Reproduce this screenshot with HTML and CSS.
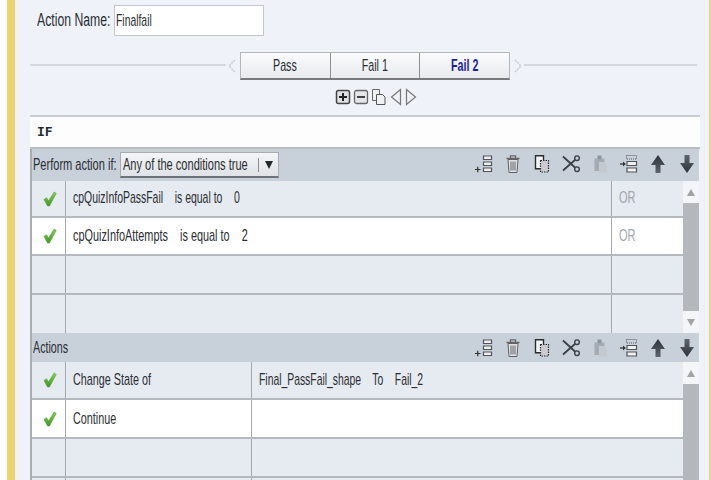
FILE: index.html
```html
<!DOCTYPE html>
<html lang="en">
<head>
<meta charset="utf-8">
<title>Advanced Actions</title>
<link rel="stylesheet" href="styles.css">
</head>
<body>
<svg class="defs" width="0" height="0" aria-hidden="true">
  <defs>
    <linearGradient id="grn" x1="0" y1="0" x2="0" y2="1"><stop offset="0" stop-color="#8fd052"/><stop offset="1" stop-color="#3a9a20"/></linearGradient>
    <linearGradient id="arr" x1="0" y1="0" x2="0" y2="1"><stop offset="0" stop-color="#2c3238"/><stop offset="1" stop-color="#5d646b"/></linearGradient>
    <linearGradient id="arrd" x1="0" y1="0" x2="0" y2="1"><stop offset="0" stop-color="#5d646b"/><stop offset="1" stop-color="#2c3238"/></linearGradient>
    <symbol id="check" viewBox="0 0 14 16"><path d="M1 8.500 3.600 6.800 5.500 10 11.200 1 13.200 2.400 6.400 15H4.600z" fill="url(#grn)" stroke="#4d9a38" stroke-width=".6"/></symbol>
    <symbol id="add" viewBox="0 0 20 20"><path d="M1 15.500h5.500M3.750 12.800v5.500" stroke="#333" stroke-width="1.200" fill="none"/><path d="M9.500 2h8v3.500h-8zM9.500 8h8v3.500h-8zM9.500 14h8v3.500h-8z" fill="#eef0f3" stroke="#50555a" stroke-width="1.200"/></symbol>
    <symbol id="trash" viewBox="0 0 20 20"><path d="M3.500 4.500h13M7.500 4V1.800h5V4" fill="none" stroke="#666" stroke-width="1.300"/><path d="M5 5.500l1 13h8l1-13zM8 7.500v9M10 7.500v9M12 7.500v9" fill="#dfe1e5" stroke="#5f6368" stroke-width="1"/></symbol>
    <symbol id="copy" viewBox="0 0 20 20"><path d="M3.500 1.800h8v13h-8z" fill="#f3f4f6" stroke="#2a2d30" stroke-width="1.400"/><path d="M8.500 6.500h8v11.500h-8z" fill="#c9ccd0" stroke="#333" stroke-width="1.200" stroke-dasharray="1.500 1"/></symbol>
    <symbol id="cut" viewBox="0 0 20 20"><path d="M2 2.500 14 13.500M2 16.500 14 6" fill="none" stroke="#3a3f44" stroke-width="1.800"/><circle cx="16" cy="4.200" r="2.300" fill="none" stroke="#3a3f44" stroke-width="1.400"/><circle cx="16" cy="15.200" r="2.300" fill="none" stroke="#3a3f44" stroke-width="1.400"/></symbol>
    <symbol id="paste" viewBox="0 0 20 20"><path d="M4.500 4.500h10V17h-10z" fill="#a4abb3"/><path d="M7.500 1.500h4v3.500h-4z" fill="#8a929a"/><path d="M9 8h5.500l2.500 2.500V18.500H9z" fill="#c4c9cf"/></symbol>
    <symbol id="insert" viewBox="0 0 20 20"><path d="M7.500 1.500h10v3.500h-10z" fill="none" stroke="#555a60" stroke-width="1" stroke-dasharray="1 1"/><path d="M1 10h4" fill="none" stroke="#333" stroke-width="1.300"/><path d="M4 7.500 6.800 10 4 12.500z" fill="#333"/><path d="M8 7.500h9.500v4H8zM8 14h9.500v4H8z" fill="#eef0f3" stroke="#50555a" stroke-width="1.200"/></symbol>
    <symbol id="up" viewBox="0 0 20 20"><path d="M10 1 17 11h-4.500v8h-5v-8H3z" fill="url(#arr)"/></symbol>
    <symbol id="down" viewBox="0 0 20 20"><path d="M10 19 3 9h4.500V1h5v8H17z" fill="url(#arrd)"/></symbol>
  </defs>
</svg>
<div class="page">
  <div class="strip"></div>
  <main class="content">
    <div class="name-row">
      <label class="name-label"><span class="tx">Action Name:</span></label>
      <div class="name-input"><span class="tx">Finalfail</span></div>
    </div>

    <div class="tabs-row">
      <div class="rule rule-left"></div>
      <svg class="chev chev-left" width="12" height="16" viewBox="0 0 12 16"><path d="M9 2 3 8l6 6" fill="none" stroke="#c8ccd0" stroke-width="1.500" stroke-dasharray="2 1"/></svg>
      <div class="tabs">
        <div class="tab"><span class="tx">Pass</span></div>
        <div class="tab"><span class="tx">Fail 1</span></div>
        <div class="tab active"><span class="tx">Fail 2</span></div>
      </div>
      <svg class="chev chev-right" width="12" height="16" viewBox="0 0 12 16"><path d="M3 2l6 6-6 6" fill="none" stroke="#c8ccd0" stroke-width="1.500" stroke-dasharray="2 1"/></svg>
      <div class="rule"></div>
    </div>

    <div class="state-tools">
      <svg width="16" height="16" viewBox="0 0 16 16"><rect x="1.500" y="1.500" width="13" height="13" rx="2" fill="#dde0e4" stroke="#444" stroke-width="1.500"/><path d="M4 8h8M8 4v8" stroke="#222" stroke-width="2"/></svg>
      <svg width="16" height="16" viewBox="0 0 16 16"><rect x="1.500" y="1.500" width="13" height="13" rx="2" fill="#e4e6ea" stroke="#666" stroke-width="1.300"/><path d="M4 8h8" stroke="#444" stroke-width="2"/></svg>
      <svg width="16" height="18" viewBox="0 0 16 18"><path d="M1.500 1.500h7v11h-7z" fill="#eef0f3" stroke="#666"/><path d="M5.500 6.500h6l2.500 2.500v7.500H5.500z" fill="#eef0f3" stroke="#555"/></svg>
      <svg class="tri" width="12" height="18" viewBox="0 0 12 18"><path d="M10.500 1.500 1.500 9l9 7.500z" fill="#eef1f7" stroke="#777" stroke-width="1.200"/></svg>
      <svg class="tri" width="12" height="18" viewBox="0 0 12 18"><path d="M1.500 1.500 10.500 9l-9 7.500z" fill="#eef1f7" stroke="#777" stroke-width="1.200"/></svg>
    </div>

    <section class="panel">
      <header class="if-head">IF</header>

      <div class="bar bar-if">
        <div class="bar-label"><span class="tx">Perform action if:</span></div>
        <div class="select"><div class="sel-text"><span class="tx">Any of the conditions true</span></div><span class="sel-arrow"></span></div>
        <div class="icons">
          <svg><use href="#add"/></svg><svg><use href="#trash"/></svg><svg><use href="#copy"/></svg><svg><use href="#cut"/></svg><svg><use href="#paste"/></svg><svg><use href="#insert"/></svg><svg><use href="#up"/></svg><svg><use href="#down"/></svg>
        </div>
      </div>

      <div class="list cond-list">
        <div class="rows">
          <div class="row alt first"><div class="c-check"><svg><use href="#check"/></svg></div><div class="c-main"><span class="tx">cpQuizInfoPassFail &nbsp;&nbsp; is equal to &nbsp;&nbsp; 0</span></div><div class="c-or"><span class="tx">OR</span></div></div>
          <div class="row white"><div class="c-check"><svg><use href="#check"/></svg></div><div class="c-main"><span class="tx">cpQuizInfoAttempts &nbsp;&nbsp; is equal to &nbsp;&nbsp; 2</span></div><div class="c-or"><span class="tx">OR</span></div></div>
          <div class="row alt tall"><div class="c-check"></div><div class="c-main"></div><div class="c-or"></div></div>
          <div class="row alt last"><div class="c-check"></div><div class="c-main"></div><div class="c-or"></div></div>
        </div>
        <div class="scroll">
          <div class="sbtn"><span class="up"></span></div>
          <div class="strack"></div>
          <div class="sbtn"><span class="down"></span></div>
        </div>
      </div>

      <div class="bar bar-act">
        <div class="bar-label"><span class="tx">Actions</span></div>
        <div class="icons">
          <svg><use href="#add"/></svg><svg><use href="#trash"/></svg><svg><use href="#copy"/></svg><svg><use href="#cut"/></svg><svg><use href="#paste"/></svg><svg><use href="#insert"/></svg><svg><use href="#up"/></svg><svg><use href="#down"/></svg>
        </div>
      </div>

      <div class="list act-list">
        <div class="rows">
          <div class="row alt"><div class="c-check"><svg><use href="#check"/></svg></div><div class="c-act"><span class="tx">Change State of</span></div><div class="c-arg"><span class="tx">Final_PassFail_shape &nbsp;&nbsp; To &nbsp;&nbsp; Fail_2</span></div></div>
          <div class="row white tall"><div class="c-check"><svg><use href="#check"/></svg></div><div class="c-act"><span class="tx">Continue</span></div><div class="c-arg"></div></div>
          <div class="row alt tall"><div class="c-check"></div><div class="c-act"></div><div class="c-arg"></div></div>
          <div class="row alt"><div class="c-check"></div><div class="c-act"></div><div class="c-arg"></div></div>
        </div>
        <div class="scroll">
          <div class="sbtn"><span class="up"></span></div>
          <div class="strack"></div>
        </div>
      </div>
    </section>
  </main>
  <div class="edge"></div>
</div>
</body>
</html>
```
FILE: styles.css
```css
* { box-sizing: border-box; }
html, body { margin: 0; padding: 0; }
body {
  width: 711px;
  height: 480px;
  overflow: hidden;
  background: #fff;
  font-family: "Liberation Sans", Arial, sans-serif;
  font-size: 17px;
  color: #2a2f33;
}
.defs { position: absolute; }
.tx {
  display: inline-block;
  white-space: nowrap;
  transform: scaleX(0.61);
  transform-origin: left center;
}
.page { display: flex; height: 480px; padding-left: 7px; overflow: hidden; }
.strip { width: 8px; flex: none; background: #edd36f; }
.edge { width: 2px; flex: none; background: #e9d68a; }
.content {
  flex: none;
  width: 694px;
  height: 480px;
  background: #eff2f8;
  padding: 5px 0 0 15px;
  overflow: hidden;
}
.name-row { display: flex; align-items: center; padding-left: 7px; gap: 3px; height: 31px; }
.name-label { width: 74px; flex: none; font-size: 18px; white-space: nowrap; }
.name-label .tx { transform: scaleX(0.68); }
.name-input {
  width: 150px;
  flex: none;
  height: 31px;
  background: #fff;
  border: 1px solid #c3c6ca;
  padding-left: 1px;
  line-height: 29px;
}
.tabs-row { display: flex; align-items: center; margin-top: 16px; height: 28px; width: 667px; }
.rule { flex: 1; height: 2px; margin-bottom: 2px; background: #d5d8dc; }
.rule-left { flex: none; width: 196px; }
.chev { flex: none; }
.chev-left { margin-right: 2px; }
.chev-right { margin-left: 2px; }
.tabs {
  flex: none;
  display: flex;
  width: 270px;
  height: 28px;
  border: 1px solid #b4b7ba;
  border-bottom: 2px solid #77797c;
  background: linear-gradient(#fbfbfc, #e8eaed);
}
.tab { flex: 1; text-align: center; line-height: 26px; border-right: 1px solid #8b8e92; }
.tab:last-child { border-right: 0; }
.tab .tx { transform: scaleX(0.63); transform-origin: center; }
.tab.active { color: #1a1fa8; font-weight: 700; }
.state-tools { display: flex; justify-content: center; align-items: center; gap: 2px; width: 668px; height: 18px; margin-top: 8px; margin-left: 12px; }
.tri { margin-left: 1px; }
.panel { margin-top: 9px; width: 669px; border-left: 2px solid #a9adb2; }
.if-head {
  height: 34px;
  margin-left: -2px;
  margin-right: -1px;
  background: #fdfdfe;
  border-top: 2px solid #c9ccd0;
  border-bottom: 2px solid #b9bdc2;
  padding-left: 7px;
  font: 700 13px/30px "DejaVu Sans Mono", monospace;
  color: #1d3030;
}
.bar { display: flex; align-items: center; background: #c8d0da; padding-left: 1px; }
.bar-if { height: 32px; }
.bar-act { height: 29px; }
.bar-if .icons { margin-top: -2px; }
.bar-label { width: 84px; flex: none; white-space: nowrap; }
.bar-label .tx { transform: scaleX(0.65); }
.bar-act .bar-label .tx { transform: scaleX(0.63); }
.select {
  display: flex;
  align-items: center;
  width: 159px;
  flex: none;
  height: 26px;
  margin-left: 3px;
  padding-left: 2px;
  background: linear-gradient(#f4f5f7, #dfe2e6);
  border: 1px solid #a9adb2;
  border-bottom: 2px solid #6e7175;
}
.sel-text { width: 135px; flex: none; white-space: nowrap; }
.sel-text .tx { transform: scaleX(0.65); }
.sel-arrow {
  height: 14px;
  position: relative;
  flex: none;
  width: 18px;
  border-left: 1px solid #8a8d91;
}
.sel-arrow::after {
  content: "";
  position: absolute;
  left: 6px;
  top: 3px;
  border: 4px solid transparent;
  border-top: 8px solid #23282d;
  border-bottom: 0;
}
.icons { margin-left: auto; display: flex; gap: 9px; padding-right: 2px; }
.icons svg { width: 20px; height: 20px; display: block; }
.list { display: flex; }
.rows { width: 651px; flex: none; }
.scroll { width: 16px; flex: none; display: flex; flex-direction: column; background: #b4b8bc; }
.sbtn { height: 22px; background: #f3f5f8; display: flex; justify-content: center; align-items: center; }
.strack { flex: 1; }
.sbtn .up { border: 4px solid transparent; border-bottom: 7px solid #a0a4a8; border-top: 0; }
.sbtn .down { border: 4px solid transparent; border-top: 7px solid #a0a4a8; border-bottom: 0; }
.row { display: flex; height: 38px; border-bottom: 2px solid #b5b9bd; line-height: 36px; }
.row.first { height: 37px; line-height: 33px; }
.row.tall { height: 39px; line-height: 37px; }
.row.last { border-bottom: 0; }
.row.alt { background: #e6eaf1; }
.row.white { background: #fff; }
.c-check { width: 34px; flex: none; padding-left: 2px; display: flex; justify-content: center; align-items: center; border-right: 1px solid #a5a9ad; }
.c-check svg { width: 14px; height: 16px; display: block; }
.c-main { flex: 1; padding-left: 7px; border-right: 1px solid #a5a9ad; white-space: nowrap; }
.c-main .tx { transform: scaleX(0.615); }
.row.white .c-main .tx { transform: scaleX(0.64); }
.c-or { width: 71px; flex: none; padding-left: 7px; color: #a2a6aa; }
.c-or .tx { transform: scaleX(0.65); }
.c-act { width: 186px; flex: none; padding-left: 7px; border-right: 1px solid #a5a9ad; white-space: nowrap; }
.c-act .tx { transform: scaleX(0.635); }
.c-arg { flex: 1; padding-left: 7px; white-space: nowrap; }
```
